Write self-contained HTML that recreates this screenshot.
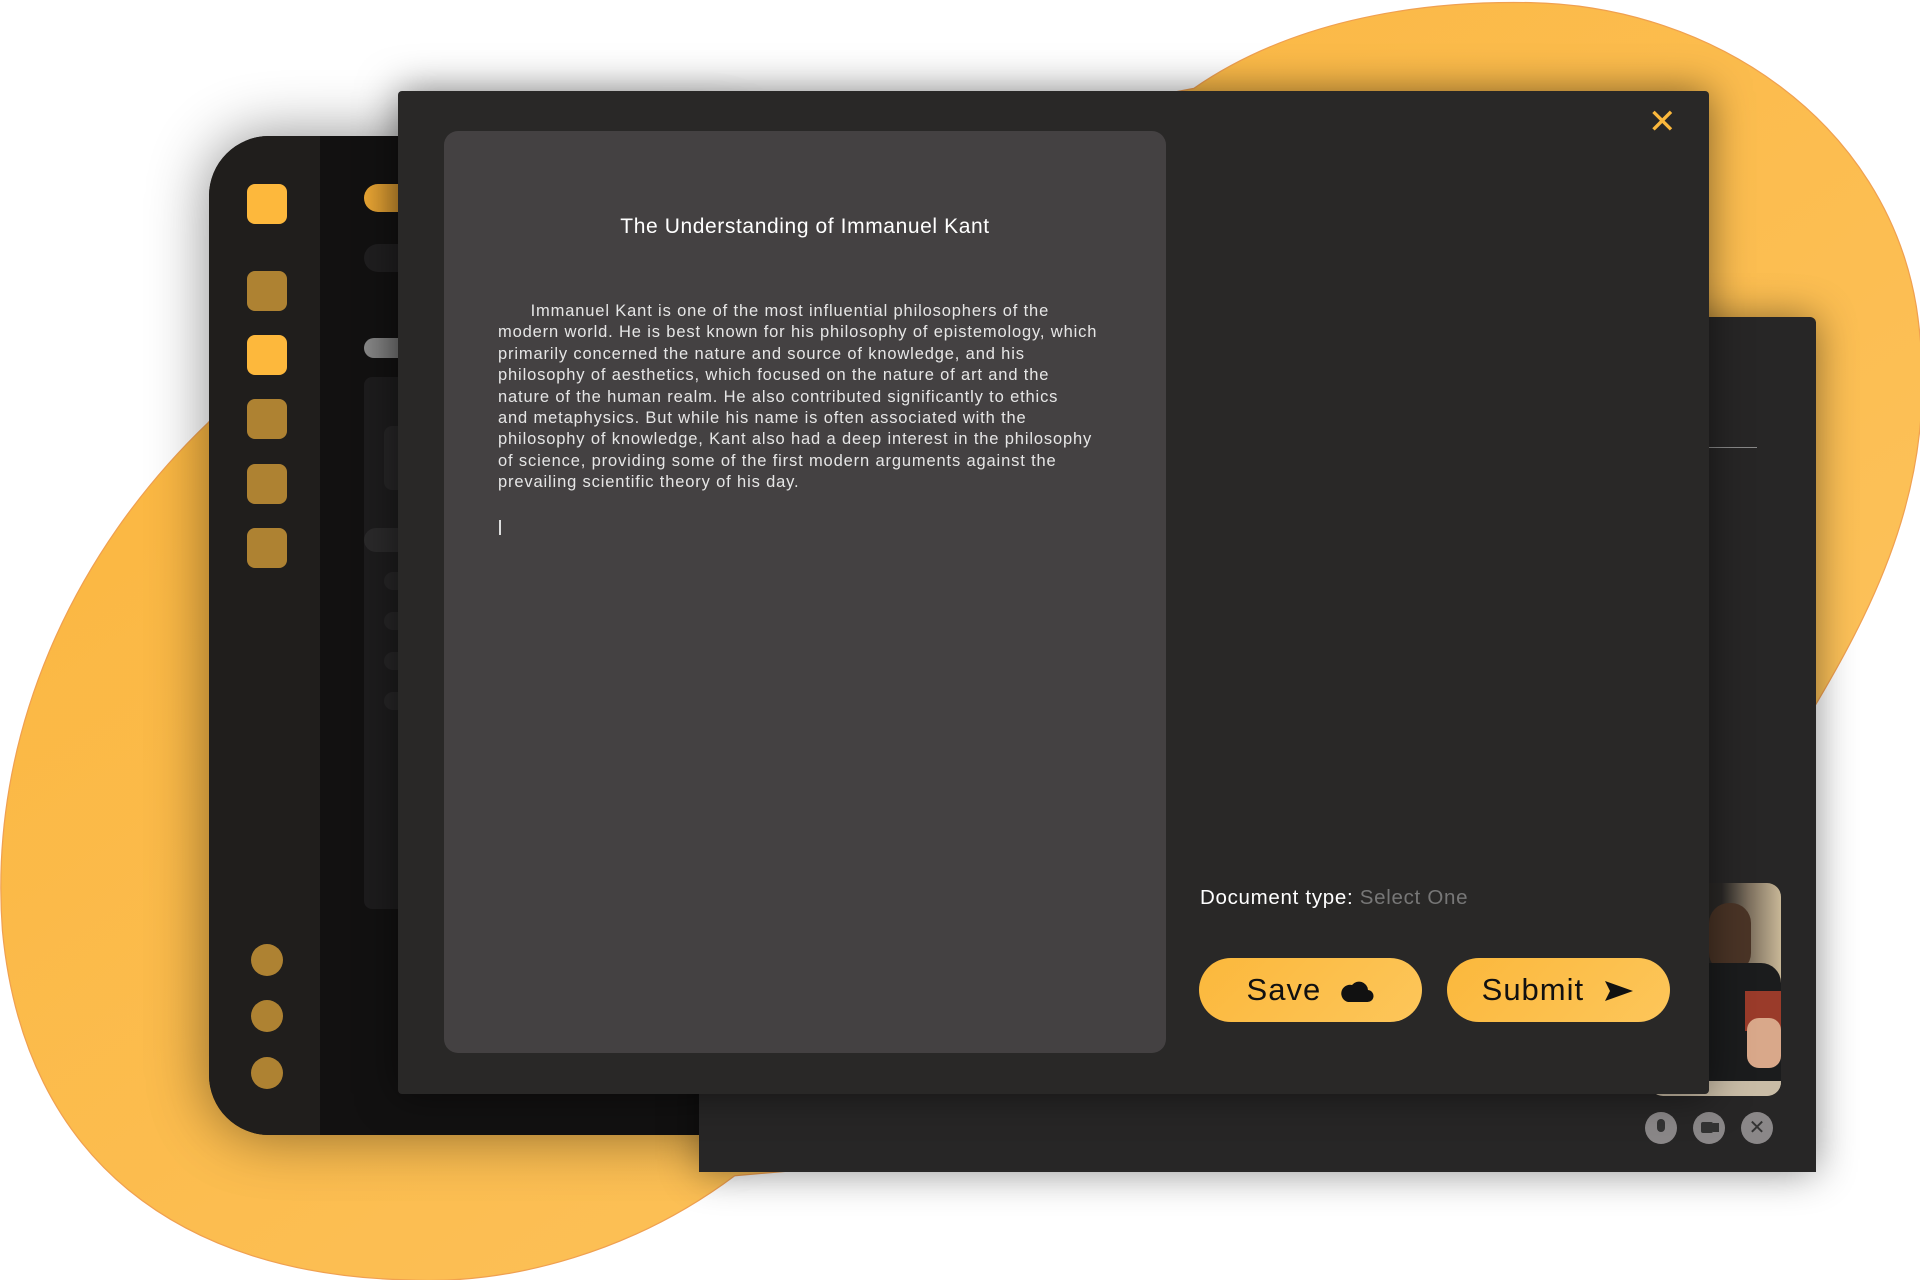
<!DOCTYPE html>
<html><head><meta charset="utf-8"><style>
*{margin:0;padding:0;box-sizing:border-box}
body{width:1920px;height:1280px;background:#fff;position:relative;overflow:hidden;font-family:"Liberation Sans",sans-serif}
.a{position:absolute}
.t div{white-space:nowrap}
</style></head><body>
<svg class="a" style="left:0;top:0" width="1920" height="1280" viewBox="0 0 1568 1045">
<defs><linearGradient id="g" x1="0" y1="0" x2="1" y2="1"><stop offset="0" stop-color="#fbb43a"/><stop offset="1" stop-color="#fcc563"/></linearGradient></defs>
<path d="M975,72 C1050,20 1150,0 1250,2 C1400,5 1540,100 1565,250 C1585,380 1540,480 1480,580 L1300,900 L600,960 C520,1020 420,1050 330,1045 C150,1040 20,950 2,760 C-10,600 60,450 170,345 L300,200 Z" fill="url(#g)" stroke="#f0a050" stroke-width="1"/>
</svg>
<!-- sidebar window -->
<div class="a" style="left:209px;top:136px;width:520px;height:999px;border-radius:60px 0 0 60px;background:#121111;box-shadow:0 0 60px rgba(0,0,0,.45);overflow:hidden">
 <div class="a" style="left:0;top:0;width:111px;height:100%;background:#201e1c"></div>
 <div class="a" style="left:38px;top:48px;width:40px;height:40px;border-radius:8px;background:#fdb83c"></div>
 <div class="a" style="left:38px;top:135px;width:40px;height:40px;border-radius:8px;background:#ae8232"></div>
 <div class="a" style="left:38px;top:199px;width:40px;height:40px;border-radius:8px;background:#fdb83c"></div>
 <div class="a" style="left:38px;top:263px;width:40px;height:40px;border-radius:8px;background:#ae8232"></div>
 <div class="a" style="left:38px;top:328px;width:40px;height:40px;border-radius:8px;background:#ae8232"></div>
 <div class="a" style="left:38px;top:392px;width:40px;height:40px;border-radius:8px;background:#ae8232"></div>
 <div class="a" style="left:42px;top:808px;width:32px;height:32px;border-radius:50%;background:#ae8232"></div>
 <div class="a" style="left:42px;top:864px;width:32px;height:32px;border-radius:50%;background:#ae8232"></div>
 <div class="a" style="left:42px;top:921px;width:32px;height:32px;border-radius:50%;background:#ae8232"></div>
 <div class="a" style="left:155px;top:48px;width:100px;height:28px;border-radius:14px;background:linear-gradient(90deg,#e9a533,#8a6326)"></div>
 <div class="a" style="left:155px;top:108px;width:100px;height:28px;border-radius:14px;background:#1f1e1f"></div>
 <div class="a" style="left:155px;top:202px;width:100px;height:20px;border-radius:10px;background:linear-gradient(90deg,#888,#444)"></div>
 <div class="a" style="left:155px;top:241px;width:100px;height:532px;border-radius:8px;background:#1d1c1d"></div>
 <div class="a" style="left:175px;top:290px;width:60px;height:64px;border-radius:8px;background:#262526"></div>
 <div class="a" style="left:155px;top:392px;width:100px;height:24px;border-radius:12px;background:#2a292a"></div>
 <div class="a" style="left:175px;top:436px;width:40px;height:18px;border-radius:9px;background:#262526"></div>
 <div class="a" style="left:175px;top:476px;width:40px;height:18px;border-radius:9px;background:#262526"></div>
 <div class="a" style="left:175px;top:516px;width:40px;height:18px;border-radius:9px;background:#262526"></div>
 <div class="a" style="left:175px;top:556px;width:40px;height:18px;border-radius:9px;background:#262526"></div>
</div>
<!-- back right window -->
<div class="a" style="left:699px;top:317px;width:1117px;height:855px;border-radius:0 6px 0 0;background:#272626;box-shadow:0 0 40px rgba(0,0,0,.45)">
 <div class="a" style="left:1010px;top:130px;width:48px;height:1px;background:#888"></div>
 <div class="a" style="left:950px;top:566px;width:132px;height:213px;border-radius:14px;overflow:hidden;background:linear-gradient(90deg,#2a2826 0%,#2a2826 55%,#7a6d5c 75%,#c8b797 100%)">
  <div class="a" style="left:60px;top:20px;width:42px;height:70px;border-radius:20px;background:#4a3426"></div>
  <div class="a" style="left:40px;top:80px;width:92px;height:120px;border-radius:20px 20px 0 0;background:#1b1c1d"></div>
  <div class="a" style="left:96px;top:108px;width:36px;height:40px;background:#9a3b2a"></div>
  <div class="a" style="left:98px;top:135px;width:34px;height:50px;border-radius:12px;background:#d9a88a"></div>
  <div class="a" style="left:0;top:198px;width:132px;height:15px;background:#c9bca6"></div>
 </div>
 <div class="a" style="left:946px;top:795px;width:32px;height:32px;border-radius:50%;background:#8a8788"></div>
 <div class="a" style="left:994px;top:795px;width:32px;height:32px;border-radius:50%;background:#8a8788"></div>
 <div class="a" style="left:1042px;top:795px;width:32px;height:32px;border-radius:50%;background:#8a8788;color:#333;font-size:20px;text-align:center;line-height:32px">✕</div>
 <div class="a" style="left:958px;top:802px;width:8px;height:13px;border-radius:4px;background:#333"></div>
 <div class="a" style="left:1002px;top:805px;width:12px;height:11px;background:#333;border-radius:2px"></div>
 <div class="a" style="left:1014px;top:806px;border-left:6px solid #333;width:0;height:9px"></div>
</div>
<!-- main modal -->
<div class="a" style="left:398px;top:91px;width:1311px;height:1003px;border-radius:4px;background:#292827;box-shadow:0 0 40px rgba(0,0,0,.5)">
 <div class="a" style="left:1250px;top:14px;color:#fbb83c;font-size:34px;line-height:34px">✕</div>
 <div class="a" style="left:46px;top:40px;width:722px;height:922px;border-radius:14px;background:#444142;color:#eee">
  <div class="a" style="left:0;top:84px;width:100%;text-align:center;font-size:21px;letter-spacing:0.6px;color:#fff">The Understanding of Immanuel Kant</div>
  <div class="a t" style="left:54px;top:170px;font-size:16.5px;letter-spacing:0.85px;line-height:21.4px;color:#e6e6e6">
   <div>&nbsp;&nbsp;&nbsp;&nbsp;&nbsp;&nbsp;Immanuel Kant is one of the most influential philosophers of the</div>
   <div>modern world. He is best known for his philosophy of epistemology, which</div>
   <div>primarily concerned the nature and source of knowledge, and his</div>
   <div>philosophy of aesthetics, which focused on the nature of art and the</div>
   <div>nature of the human realm. He also contributed significantly to ethics</div>
   <div>and metaphysics. But while his name is often associated with the</div>
   <div>philosophy of knowledge, Kant also had a deep interest in the philosophy</div>
   <div>of science, providing some of the first modern arguments against the</div>
   <div>prevailing scientific theory of his day.</div>
  </div>
  <div class="a" style="left:55px;top:389px;width:2px;height:15px;background:#ddd"></div>
 </div>
 <div class="a" style="left:802px;top:795px;font-size:20.5px;letter-spacing:0.7px;color:#fff">Document type: <span style="color:#777">Select One</span></div>
 <div class="a" style="left:801px;top:867px;width:223px;height:64px;border-radius:32px;background:linear-gradient(135deg,#fbb83c,#fdc65a);color:#111;font-size:31px;letter-spacing:1px;line-height:64px;text-align:center">Save&nbsp; <svg width="34" height="26" viewBox="0 0 34 26" style="vertical-align:-3px"><path d="M8 25 H27 A6 6 0 0 0 28 13 A9 9 0 0 0 12 8 A7 7 0 0 0 8 25 Z" fill="#111"/></svg></div>
 <div class="a" style="left:1049px;top:867px;width:223px;height:64px;border-radius:32px;background:linear-gradient(135deg,#fbb83c,#fdc65a);color:#111;font-size:31px;letter-spacing:1px;line-height:64px;text-align:center">Submit&nbsp; <svg width="32" height="24" viewBox="0 0 32 24" style="vertical-align:-3px"><path d="M2 2 L30 12 L2 22 L7 12 Z" fill="#111"/></svg></div>
</div>
</body></html>
